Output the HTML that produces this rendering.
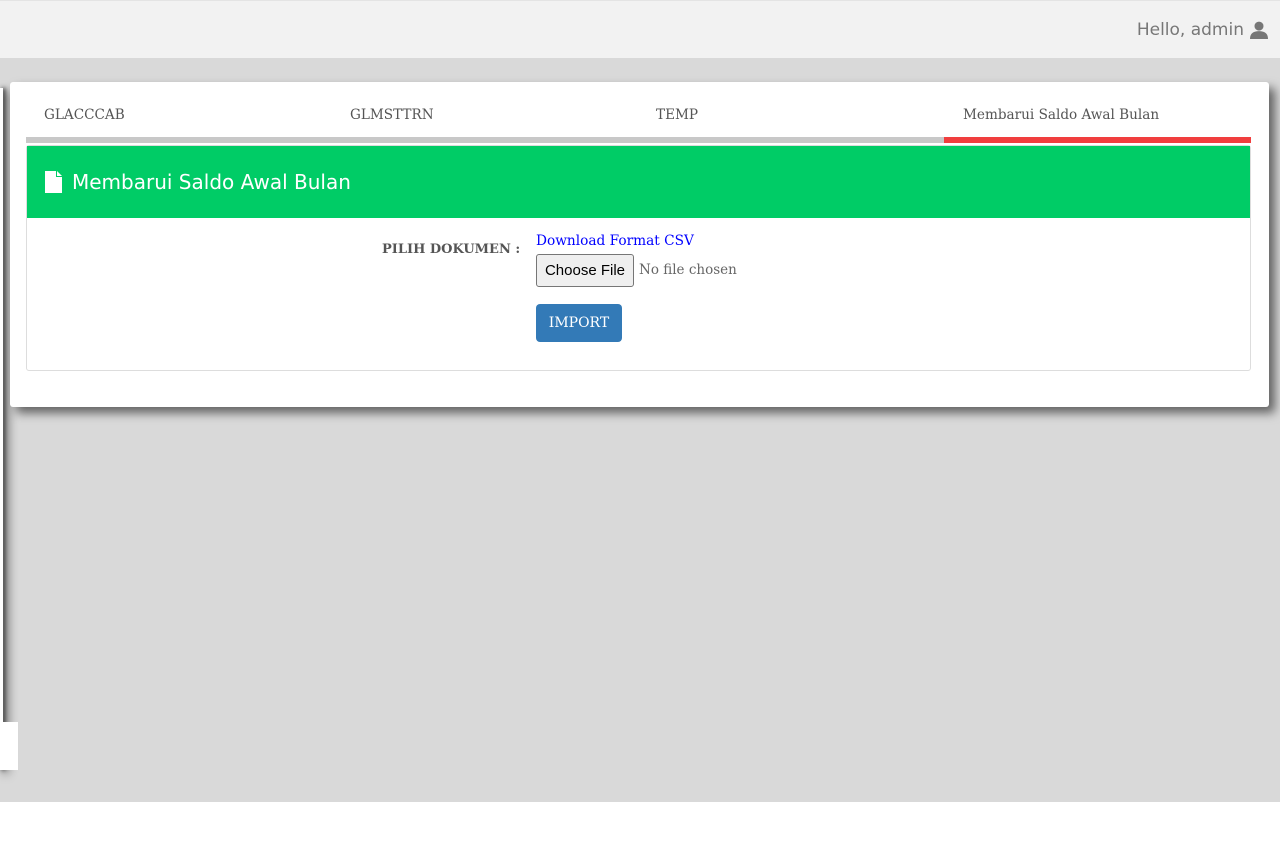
<!DOCTYPE html>
<html><head><meta charset="utf-8"><style>
*{box-sizing:border-box;margin:0;padding:0}
body{width:1280px;height:853px;background:#fff;position:relative;overflow:hidden;font-family:"DejaVu Serif","Liberation Serif",serif}
.top{position:absolute;left:0;top:0;width:1280px;height:58px;background:#f2f2f2;border-top:1px solid #e4e4e4}
.hello{position:absolute;right:12px;top:19px;font-family:"DejaVu Sans","Liberation Sans",sans-serif;font-size:17px;color:#777;display:flex;align-items:center;gap:6px}
.bg{position:absolute;left:0;top:58px;width:1280px;height:744px;background:#d9d9d9}
.side{position:absolute;left:0;top:88px;width:3px;height:682px;background:#fff;box-shadow:4px 3px 10px #000,2px 0 4px #222}
.side2{position:absolute;left:0;top:722px;width:18px;height:48px;background:#fff}
.card{position:absolute;left:10px;top:82px;width:1259px;height:325px;background:#fff;border-radius:3px;box-shadow:6px 6px 10px rgba(0,0,0,.55)}
.tab{position:absolute;top:25px;font-size:13.6px;color:#555;white-space:nowrap}
.bar{position:absolute;left:16px;top:55px;width:1225px;height:6px;background:#c8c8c8}
.red{position:absolute;left:934px;top:55px;width:307px;height:6px;background:#f03e3e}
.panel{position:absolute;left:16px;top:63px;width:1225px;height:226px;border:1px solid #ddd;border-radius:3px}
.ph{height:72px;background:#00cc66;color:#fff;font-family:"DejaVu Sans","Liberation Sans",sans-serif;font-size:20px;display:flex;align-items:center;padding-left:18px;gap:10px}
.f{position:absolute;white-space:nowrap}
.lbl{left:356px;top:97px;font-weight:bold;font-size:13px;color:#555}
.link{left:510px;top:88px;font-size:13.7px;color:#00f}
.cf{left:510px;top:109px;width:98px;height:33px;background:#efefef;border:1px solid #767676;border-radius:3px;font-family:"Liberation Sans",sans-serif;font-size:15px;color:#000;text-align:center;line-height:31px}
.nf{left:613px;top:117px;font-size:13.5px;color:#666}
.imp{left:510px;top:159px;width:86px;height:38px;background:#337ab7;border-radius:4px;color:#fff;font-size:14px;text-align:center;line-height:38px}
</style></head><body>
<div class="top"><div class="hello">Hello, admin <svg width="18" height="18" viewBox="0 0 16 16"><circle cx="8" cy="4.5" r="4" fill="#777"/><path d="M0 16c0-5 3-7 8-7s8 2 8 7z" fill="#777"/></svg></div></div>
<div class="bg"></div>
<div class="side"></div><div class="side2"></div>
<div class="card">
<div class="tab" style="left:34px">GLACCCAB</div>
<div class="tab" style="left:340px">GLMSTTRN</div>
<div class="tab" style="left:646px">TEMP</div>
<div class="tab" style="left:953px">Membarui Saldo Awal Bulan</div>
<div class="bar"></div><div class="red"></div>
<div class="panel">
<div class="ph"><svg width="17" height="22" viewBox="0 0 17 22"><path d="M0 0h11v6h6v16H0z" fill="#fff"/><path d="M12 0l5 5h-5z" fill="#fff"/></svg>Membarui Saldo Awal Bulan</div>
</div>
</div>
<div style="position:absolute;left:26px;top:145px;width:1200px;height:0">
<div class="f lbl">PILIH DOKUMEN :</div>
<div class="f link">Download Format CSV</div>
<div class="f cf">Choose File</div>
<div class="f nf">No file chosen</div>
<div class="f imp">IMPORT</div>
</div>
</body></html>
